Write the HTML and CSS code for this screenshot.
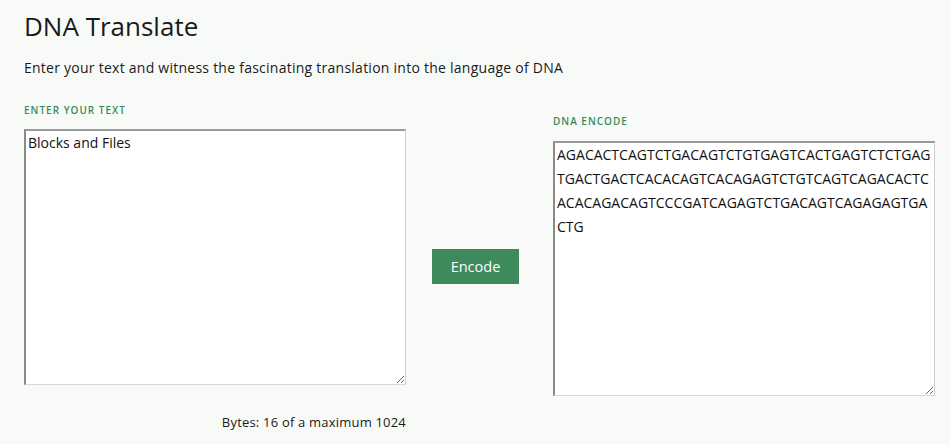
FILE: index.html
```html
<!DOCTYPE html>
<html lang="en">
<head>
    <meta charset="UTF-8">
    <meta name="viewport" content="width=device-width, initial-scale=1.0">
    <title>DNA Translate</title>
    <link rel="stylesheet" href="styles.css">
</head>
<body>
    <h1>DNA Translate</h1>
    <p class="intro">Enter your text and witness the fascinating translation into the language of DNA</p>
    <div class="translator">
        <div class="column column-input">
            <label for="texto">Enter your text</label>
            <textarea id="texto">Blocks and Files</textarea>
            <p class="bytes">Bytes: <span id="bytes">16</span> of a maximum 1024</p>
        </div>
        <div class="column column-button">
            <button id="encode">Encode</button>
        </div>
        <div class="column column-output">
            <label for="dna">DNA Encode</label>
            <textarea id="dna" readonly>AGACACTCAGTCTGACAGTCTGTGAGTCACTGAGTCTCTGAG
TGACTGACTCACACAGTCACAGAGTCTGTCAGTCAGACACTC
ACACAGACAGTCCCGATCAGAGTCTGACAGTCAGAGAGTGA
CTG</textarea>
        </div>
    </div>
</body>
</html>
```
FILE: styles.css
```css
body {
    font-family: "Open Sans", Arial, sans-serif;
    margin: 0;
    padding: 0 15px 0 24px;
    background-color: #f8faf8;
    color: #1a1a1a;
}
h1 {
    font-size: 26px;
    font-weight: 400;
    margin: 10px 0 0;
    line-height: 32px;
}
.intro {
    font-size: 14px;
    letter-spacing: 0.25px;
    margin: 16px 0 0;
    line-height: 20px;
}
.translator {
    display: flex;
    align-items: flex-start;
    margin-top: 25px;
}
.column {
    display: flex;
    flex-direction: column;
    flex-shrink: 0;
}
label {
    font-size: 10px;
    font-weight: 600;
    letter-spacing: 1px;
    text-transform: uppercase;
    color: #3b8a5c;
    line-height: 14px;
}
textarea {
    font-family: "Open Sans", Arial, sans-serif;
    font-size: 14px;
    color: #111;
    background: #fff;
    border-style: solid;
    border-width: 2px 1px 1px 2px;
    border-color: #9a9a9a #cfcfcf #d8d8d8 #8a8a8a;
    border-radius: 0;
    outline: none;
    box-sizing: border-box;
}
.column-input textarea {
    width: 382px;
    height: 256px;
    margin-top: 12px;
    padding: 2px 2px;
    line-height: 20px;
}
.bytes {
    font-size: 13px;
    letter-spacing: 0.2px;
    text-align: right;
    margin: 28px 0 0;
    line-height: 18px;
}
.column-button {
    width: 147px;
    box-sizing: border-box;
    padding-right: 8px;
    align-self: stretch;
    justify-content: center;
    align-items: center;
    padding-bottom: 2px;
}
button {
    font-family: "Open Sans", Arial, sans-serif;
    font-size: 14.5px;
    background-color: #3d8a5c;
    color: #fff;
    border: none;
    width: 87px;
    height: 35px;
    cursor: pointer;
}
button:hover {
    background-color: #2f7149;
}
.column-output {
    margin-top: 11px;
}
.column-output textarea {
    width: 382px;
    height: 255px;
    margin-top: 13px;
    padding: 0 2px;
    line-height: 24px;
    white-space: pre;
    overflow: hidden;
}
```
